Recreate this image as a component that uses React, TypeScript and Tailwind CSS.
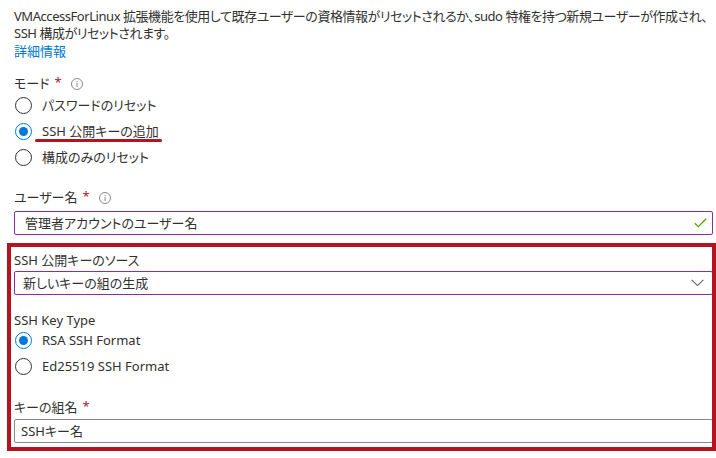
import React from "react";

const font = "font-['Noto_Sans','Noto_Sans_CJK_JP',sans-serif] [font-feature-settings:'palt']";

function Required() {
  return <span className="ml-[5px] text-[#a4262c] text-[13px] leading-[13px] relative top-[-1px]">*</span>;
}

function Info() {
  return (
    <svg className="ml-[9px]" width="12" height="12" viewBox="0 0 12 12" fill="none">
      <circle cx="6" cy="6" r="5.5" stroke="#8a8886" />
      <rect x="5.5" y="5" width="1" height="4" fill="#8a8886" />
      <rect x="5.5" y="3" width="1" height="1" fill="#8a8886" />
    </svg>
  );
}

function Radio({ label, checked }: { label: string; checked?: boolean }) {
  return (
    <div className="flex h-[24px] items-center">
      <span
        className={
          "ml-[1px] flex h-[17px] w-[17px] items-center justify-center rounded-full border " +
          (checked ? "border-[#0078d4]" : "border-[#323130]")
        }
      >
        {checked && <span className="h-[9px] w-[9px] rounded-full bg-[#0078d4]" />}
      </span>
      <span className="ml-[10px]">{label}</span>
    </div>
  );
}

function Label({ children }: { children: React.ReactNode }) {
  return <div className="flex h-[17px] items-center leading-[17px]">{children}</div>;
}

export default function App() {
  return (
    <div className={`relative h-[458px] w-[716px] overflow-hidden bg-white pl-[14px] pt-[8px] text-[13px] leading-[17px] text-[#323130] ${font}`}>
      <p className="whitespace-nowrap tracking-[-0.45px]">
        VMAccessForLinux 拡張機能を使用して既存ユーザーの資格情報がリセットされるか、sudo 特権を持つ新規ユーザーが作成され、
        <br />
        SSH 構成がリセットされます。
      </p>
      <a className="mt-[1px] block text-[#0078d4]">詳細情報</a>

      <div className="mt-[15px]">
        <Label>
          モード<Required />
          <Info />
        </Label>
      </div>
      <div className="mt-[1px] flex flex-col gap-[2px]">
        <Radio label="パスワードのリセット" />
        <Radio label="SSH 公開キーの追加" checked />
        <Radio label="構成のみのリセット" />
      </div>

      <div className="mt-[20px]">
        <Label>
          ユーザー名<Required />
          <Info />
        </Label>
      </div>
      <div className="mt-[5px] flex h-[24px] w-[699px] items-center justify-between rounded-[2px] border border-[#8a2da5] pl-[10px] pr-[5px]">
        <span>管理者アカウントのユーザー名</span>
        <svg width="13" height="10" viewBox="0 0 13 10" fill="none">
          <path d="M0.8 5.2 L4.3 8.6 L12.2 0.8" stroke="#57a300" strokeWidth="1.3" />
        </svg>
      </div>

      <div className="mt-[17px]">
        <Label>SSH 公開キーのソース</Label>
      </div>
      <div className="mt-[2px] flex h-[24px] w-[699px] items-center justify-between rounded-[2px] border border-[#8a2da5] pl-[8px] pr-[8px]">
        <span>新しいキーの組の生成</span>
        <svg width="13" height="8" viewBox="0 0 13 8" fill="none">
          <path d="M0.6 0.8 L6.5 6.6 L12.4 0.8" stroke="#605e5c" strokeWidth="1.1" />
        </svg>
      </div>

      <div className="mt-[17px]">
        <Label>SSH Key Type</Label>
      </div>
      <div className="mt-[-1px] flex flex-col gap-[2px]">
        <Radio label="RSA SSH Format" checked />
        <Radio label="Ed25519 SSH Format" />
      </div>

      <div className="mt-[21px]">
        <Label>
          キーの組名<Required />
        </Label>
      </div>
      <div className="mt-[3px] flex h-[24px] w-[699px] items-center rounded-[2px] border border-[#8a8886] pl-[6px]">
        <span>SSHキー名</span>
      </div>

      <div className="pointer-events-none absolute left-[35px] top-[139px] h-[3px] w-[127px] rounded-full bg-[#b5131f]" />
      <div className="pointer-events-none absolute left-[7px] top-[243px] h-[208px] w-[709px] border-4 border-[#b5131f]" />
    </div>
  );
}
